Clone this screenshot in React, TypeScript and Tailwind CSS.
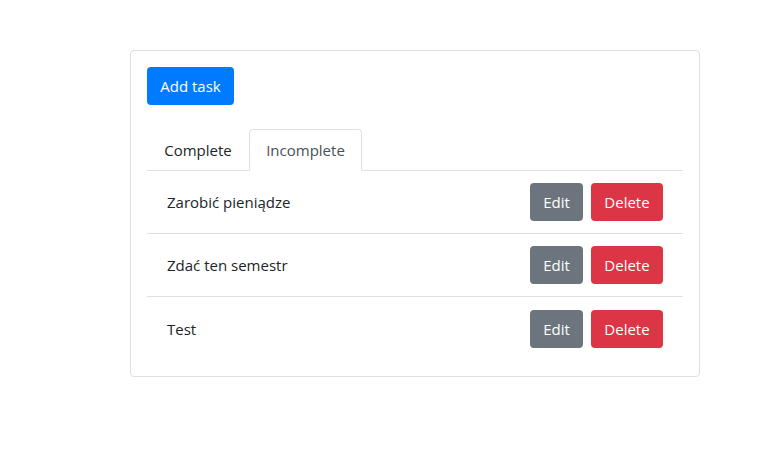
import React from 'react';

const tasks = ['Zarobić pieniądze', 'Zdać ten semestr', 'Test'];

export default function App() {
  return (
    <div className="min-h-screen bg-white pl-[130px] pt-[50px] text-[15px] leading-[24px] text-[#212529] font-['Open_Sans',sans-serif]">
      <div className="w-[570px] rounded-[4px] border border-[#dfdfdf] p-4">
        {/* Add button */}
        <button className="h-[38px] w-[87px] rounded-[4px] bg-[#007bff] text-white">Add task</button>

        {/* Tabs */}
        <div className="mt-6 flex border-b border-[#dee2e6]">
          <div className="-mb-px flex h-[42px] w-[102px] items-center justify-center border border-transparent">
            Complete
          </div>
          <div className="-mb-px flex h-[42px] w-[113px] items-center justify-center rounded-t-[4px] border border-[#dee2e6] border-b-white bg-white text-[#495057]">
            Incomplete
          </div>
        </div>

        {/* Task list */}
        <ul>
          {tasks.map((t, i) => (
            <li
              key={t}
              className={`flex h-[63px] items-center justify-between px-5 ${
                i < tasks.length - 1 ? 'border-b border-[#dfdfdf]' : ''
              }`}
            >
              <span>{t}</span>
              <div className="flex gap-2">
                <button className="h-[38px] w-[53px] rounded-[4px] bg-[#6c757d] text-white">Edit</button>
                <button className="h-[38px] w-[72px] rounded-[4px] bg-[#dc3545] text-white">Delete</button>
              </div>
            </li>
          ))}
        </ul>
      </div>
    </div>
  );
}
